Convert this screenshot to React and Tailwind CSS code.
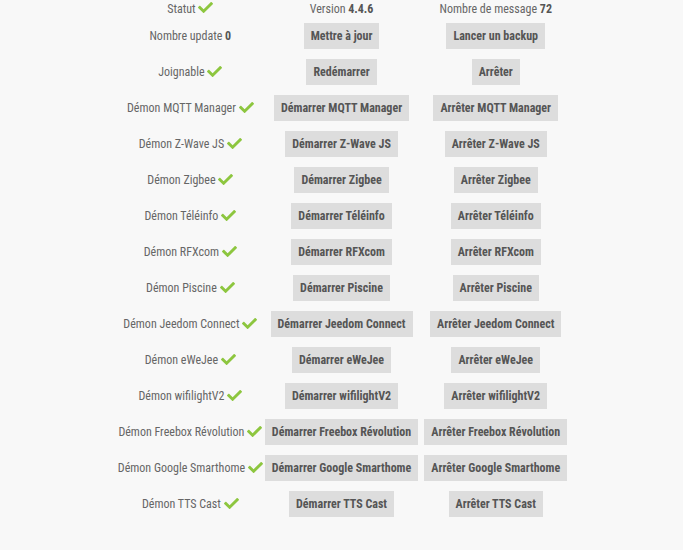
import React from "react";
import { FaCheck } from "react-icons/fa";

const Check = () => (
  <FaCheck className="inline-block -mt-[3px] text-[#8dc63f]" size={15} />
);

const Btn = ({ children }) => (
  <button className="bg-[#dddddd] text-[#555555] font-bold text-[12px] leading-[16px] px-[7px] py-[5px] whitespace-nowrap">
    {children}
  </button>
);

const daemons = [
  "MQTT Manager",
  "Z-Wave JS",
  "Zigbee",
  "Téléinfo",
  "RFXcom",
  "Piscine",
  "Jeedom Connect",
  "eWeJee",
  "wifilightV2",
  "Freebox Révolution",
  "Google Smarthome",
  "TTS Cast",
];

const c1 = "text-center pl-[2px] pr-[1px] whitespace-nowrap";
const c2 = "text-center px-[1px]";
const c3 = "text-center pl-[5px] pr-0";

export default function App() {
  return (
    <div className="w-full h-[550px] bg-[#f8f8f8] text-[#666666] text-[12px] overflow-hidden font-['Roboto_Condensed','Roboto',sans-serif]">
      <table className="mx-auto border-collapse -mt-[1px]">
        <tbody>
          <tr className="h-[19px]">
            <td className={c1}>
              Statut <Check />
            </td>
            <td className={c2 + " whitespace-nowrap"}>
              Version <b className="text-[#555555]">4.4.6</b>
            </td>
            <td className={c3 + " whitespace-nowrap"}>
              Nombre de message <b className="text-[#555555]">72</b>
            </td>
          </tr>
          <tr className="h-[36px]">
            <td className={c1}>
              Nombre update <b className="text-[#555555]">0</b>
            </td>
            <td className={c2}>
              <Btn>Mettre à jour</Btn>
            </td>
            <td className={c3}>
              <Btn>Lancer un backup</Btn>
            </td>
          </tr>
          <tr className="h-[36px]">
            <td className={c1}>
              Joignable <Check />
            </td>
            <td className={c2}>
              <Btn>Redémarrer</Btn>
            </td>
            <td className={c3}>
              <Btn>Arrêter</Btn>
            </td>
          </tr>
          {daemons.map((name) => (
            <tr key={name} className="h-[36px]">
              <td className={c1}>
                Démon {name} <Check />
              </td>
              <td className={c2}>
                <Btn>Démarrer {name}</Btn>
              </td>
              <td className={c3}>
                <Btn>Arrêter {name}</Btn>
              </td>
            </tr>
          ))}
        </tbody>
      </table>
    </div>
  );
}
